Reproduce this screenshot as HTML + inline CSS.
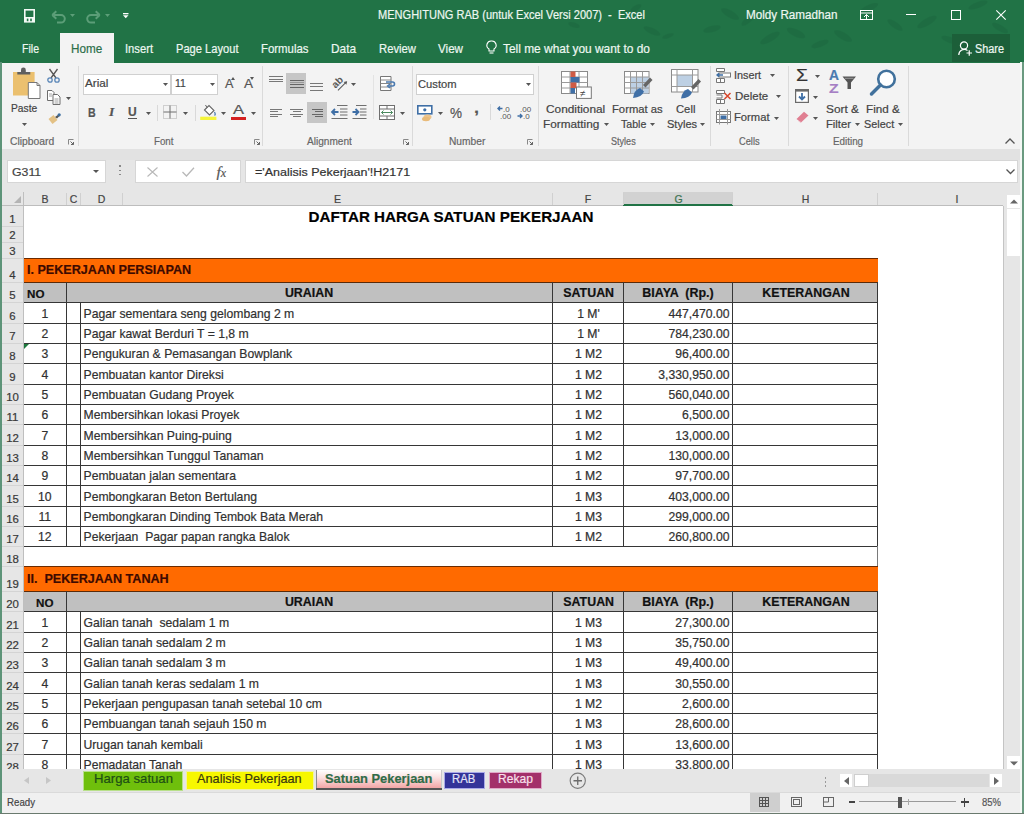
<!DOCTYPE html><html><head><meta charset="utf-8"><style>
html,body{margin:0;padding:0;width:1024px;height:814px;overflow:hidden;background:#fff;}
body{position:relative;font-family:"Liberation Sans",sans-serif;}
div,svg{position:absolute;box-sizing:border-box;}
div{-webkit-text-stroke:0.2px currentColor;}
svg{overflow:visible}
</style></head><body>
<div style="left:0px;top:0px;width:1024px;height:62px;background:#217346;"></div>
<svg style="left:0;top:0;opacity:0.55" width="1024" height="62"><ellipse cx="574" cy="25" rx="6" ry="2.5" transform="rotate(20 574 25)" fill="#1d6840"/><ellipse cx="636" cy="8" rx="6" ry="2.5" transform="rotate(-30 636 8)" fill="#1d6840"/><ellipse cx="652" cy="31" rx="9" ry="3" transform="rotate(25 652 31)" fill="#1d6840"/><ellipse cx="668" cy="36" rx="6" ry="2" transform="rotate(-20 668 36)" fill="#1d6840"/><ellipse cx="712" cy="29" rx="9" ry="3" transform="rotate(-15 712 29)" fill="#1d6840"/><ellipse cx="730" cy="14" rx="10" ry="3.5" transform="rotate(30 730 14)" fill="#1d6840"/><ellipse cx="748" cy="20" rx="8" ry="3" transform="rotate(-40 748 20)" fill="#1d6840"/><ellipse cx="770" cy="38" rx="11" ry="3.5" transform="rotate(-30 770 38)" fill="#1d6840"/><ellipse cx="796" cy="33" rx="10" ry="3.5" transform="rotate(25 796 33)" fill="#1d6840"/><ellipse cx="820" cy="44" rx="9" ry="3" transform="rotate(-20 820 44)" fill="#1d6840"/><ellipse cx="843" cy="36" rx="10" ry="3.5" transform="rotate(30 843 36)" fill="#1d6840"/><ellipse cx="869" cy="8" rx="10" ry="3" transform="rotate(-25 869 8)" fill="#1d6840"/><ellipse cx="895" cy="25" rx="9" ry="3" transform="rotate(35 895 25)" fill="#1d6840"/><ellipse cx="927" cy="22" rx="11" ry="3.5" transform="rotate(-30 927 22)" fill="#1d6840"/><ellipse cx="950" cy="40" rx="9" ry="3" transform="rotate(20 950 40)" fill="#1d6840"/><ellipse cx="978" cy="5" rx="10" ry="3" transform="rotate(-20 978 5)" fill="#1d6840"/><ellipse cx="1000" cy="28" rx="9" ry="3" transform="rotate(30 1000 28)" fill="#1d6840"/></svg>
<svg style="left:23.5px;top:9.3px;" width="11" height="13.6" viewBox="0 0 11 13.6"><rect x="0" y="0" width="11" height="13.6" fill="#f4faf6"/><rect x="1.6" y="1.6" width="7.8" height="6.4" fill="#217346"/><rect x="2.8" y="9.6" width="1.6" height="2.6" fill="#217346"/><rect x="6.2" y="9.6" width="1.6" height="2.6" fill="#217346"/></svg>
<svg style="left:51px;top:9.5px;" width="16" height="13" viewBox="0 0 16 13"><path d="M3 5 H10 A3.8 3.8 0 0 1 10 12.6 H6" fill="none" stroke="#5c9e78" stroke-width="2"/><path d="M1.3 5 L5.3 1.2 M1.3 5 L5.3 8.8" stroke="#5c9e78" stroke-width="2" fill="none"/></svg>
<svg style="left:70px;top:14px;" width="5" height="3" viewBox="0 0 5 3"><path d="M0 0 H5 L2.5 3 Z" fill="#5c9e78"/></svg>
<svg style="left:85px;top:9.5px;" width="16" height="13" viewBox="0 0 16 13"><path d="M13 5 H6 A3.8 3.8 0 0 0 6 12.6 H10" fill="none" stroke="#5c9e78" stroke-width="2"/><path d="M14.7 5 L10.7 1.2 M14.7 5 L10.7 8.8" stroke="#5c9e78" stroke-width="2" fill="none"/></svg>
<svg style="left:105px;top:14px;" width="5" height="3" viewBox="0 0 5 3"><path d="M0 0 H5 L2.5 3 Z" fill="#5c9e78"/></svg>
<svg style="left:122.8px;top:12.6px;" width="5.5" height="6" viewBox="0 0 5.5 6"><rect x="0" y="0" width="5.5" height="1.3" fill="#fff"/><path d="M0 2.2 H5.5 L2.75 5.2 Z" fill="#fff"/></svg>
<div style="top:8.16px;font-size:12.3px;line-height:14.76px;color:#eef7f1;font-weight:400;white-space:pre;font-family:'Liberation Sans',sans-serif;left:378px;transform:scaleX(0.897990714246301);transform-origin:left center;">MENGHITUNG RAB (untuk Excel Versi 2007)  -  Excel</div>
<div style="top:8.16px;font-size:12.3px;line-height:14.76px;color:#eef7f1;font-weight:400;white-space:pre;font-family:'Liberation Sans',sans-serif;left:745.5px;transform:scaleX(0.9491701244813278);transform-origin:left center;">Moldy Ramadhan</div>
<svg style="left:860px;top:10px;" width="13" height="10" viewBox="0 0 13 10"><rect x="0.5" y="0.5" width="12" height="9" fill="none" stroke="#fff" stroke-width="1"/><path d="M1 3 H12" stroke="#fff"/><path d="M4 7 L6.5 4.5 L9 7 M6.5 4.5 V9" fill="none" stroke="#fff" stroke-width="1"/></svg>
<div style="left:906px;top:14px;width:10px;height:1px;background:#fff;"></div>
<svg style="left:951px;top:10px;" width="10" height="10" viewBox="0 0 10 10"><rect x="0.5" y="0.5" width="9" height="9" fill="none" stroke="#fff" stroke-width="1"/></svg>
<svg style="left:996px;top:10px;" width="10" height="10" viewBox="0 0 10 10"><path d="M0.3 0.3 L9.7 9.7 M9.7 0.3 L0.3 9.7" stroke="#fff" stroke-width="1.1"/></svg>
<div style="left:60px;top:33px;width:54px;height:29px;background:#f3f3f3;"></div>
<div style="top:41.08px;font-size:12.8px;line-height:15.36px;color:#eef7f1;font-weight:400;white-space:pre;font-family:'Liberation Sans',sans-serif;left:21.5px;transform:scaleX(0.8242424242424242);transform-origin:left center;">File</div>
<div style="top:41.08px;font-size:12.8px;line-height:15.36px;color:#2b6e48;font-weight:400;white-space:pre;font-family:'Liberation Sans',sans-serif;left:70.8px;transform:scaleX(0.913783635365184);transform-origin:left center;">Home</div>
<div style="top:41.08px;font-size:12.8px;line-height:15.36px;color:#eef7f1;font-weight:400;white-space:pre;font-family:'Liberation Sans',sans-serif;left:125.2px;transform:scaleX(0.8746583365872705);transform-origin:left center;">Insert</div>
<div style="top:41.08px;font-size:12.8px;line-height:15.36px;color:#eef7f1;font-weight:400;white-space:pre;font-family:'Liberation Sans',sans-serif;left:176.3px;transform:scaleX(0.8694896095991653);transform-origin:left center;">Page Layout</div>
<div style="top:41.08px;font-size:12.8px;line-height:15.36px;color:#eef7f1;font-weight:400;white-space:pre;font-family:'Liberation Sans',sans-serif;left:261px;transform:scaleX(0.8904510837727007);transform-origin:left center;">Formulas</div>
<div style="top:41.08px;font-size:12.8px;line-height:15.36px;color:#eef7f1;font-weight:400;white-space:pre;font-family:'Liberation Sans',sans-serif;left:331px;transform:scaleX(0.9246417013407304);transform-origin:left center;">Data</div>
<div style="top:41.08px;font-size:12.8px;line-height:15.36px;color:#eef7f1;font-weight:400;white-space:pre;font-family:'Liberation Sans',sans-serif;left:378.5px;transform:scaleX(0.8816083395383469);transform-origin:left center;">Review</div>
<div style="top:41.08px;font-size:12.8px;line-height:15.36px;color:#eef7f1;font-weight:400;white-space:pre;font-family:'Liberation Sans',sans-serif;left:437.5px;transform:scaleX(0.9086778736937756);transform-origin:left center;">View</div>
<svg style="left:486px;top:40px;" width="11" height="15" viewBox="0 0 11 15"><path d="M5.5 1 A4.3 4.3 0 0 1 8 9 V11 H3 V9 A4.3 4.3 0 0 1 5.5 1 Z" fill="none" stroke="#fff" stroke-width="1.1"/><path d="M3.5 13 H7.5" stroke="#fff" stroke-width="1.1"/></svg>
<div style="top:41.08px;font-size:12.8px;line-height:15.36px;color:#eef7f1;font-weight:400;white-space:pre;font-family:'Liberation Sans',sans-serif;left:502.5px;transform:scaleX(0.9306742640075975);transform-origin:left center;">Tell me what you want to do</div>
<div style="left:952px;top:34px;width:58px;height:28px;background:#1c5f39;"></div>
<svg style="left:958px;top:41px;" width="14" height="15" viewBox="0 0 14 15"><circle cx="6" cy="4.5" r="3.6" fill="none" stroke="#fff" stroke-width="1.2"/><path d="M0.8 14 A5.5 5.5 0 0 1 9.5 9.5" fill="none" stroke="#fff" stroke-width="1.2"/><path d="M8.5 12 H14 M11.25 9.25 V14.75" stroke="#fff" stroke-width="1.2"/></svg>
<div style="top:42.36px;font-size:12.3px;line-height:14.76px;color:#eef7f1;font-weight:400;white-space:pre;font-family:'Liberation Sans',sans-serif;left:975px;transform:scaleX(0.8835570789298296);transform-origin:left center;">Share</div>
<div style="left:0px;top:62px;width:1024px;height:87px;background:#f3f3f3;"></div>
<div style="left:0px;top:62px;width:60px;height:1px;background:#217346;"></div>
<div style="left:114px;top:62px;width:910px;height:1px;background:#217346;"></div>
<div style="left:78px;top:66px;width:1px;height:80px;background:#dadada;"></div>
<div style="left:262px;top:66px;width:1px;height:80px;background:#dadada;"></div>
<div style="left:412px;top:66px;width:1px;height:80px;background:#dadada;"></div>
<div style="left:538px;top:66px;width:1px;height:80px;background:#dadada;"></div>
<div style="left:710px;top:66px;width:1px;height:80px;background:#dadada;"></div>
<div style="left:788px;top:66px;width:1px;height:80px;background:#dadada;"></div>
<div style="left:908px;top:66px;width:1px;height:80px;background:#dadada;"></div>
<div style="top:135.19px;font-size:11px;line-height:13.20px;color:#666666;font-weight:400;white-space:pre;font-family:'Liberation Sans',sans-serif;left:9.7px;transform:scaleX(0.9408641401738899);transform-origin:left center;">Clipboard</div>
<div style="top:135.19px;font-size:11px;line-height:13.20px;color:#666666;font-weight:400;white-space:pre;font-family:'Liberation Sans',sans-serif;left:154px;transform:scaleX(0.8858917480035492);transform-origin:left center;">Font</div>
<div style="top:135.19px;font-size:11px;line-height:13.20px;color:#666666;font-weight:400;white-space:pre;font-family:'Liberation Sans',sans-serif;left:307px;transform:scaleX(0.9158627739091547);transform-origin:left center;">Alignment</div>
<div style="top:135.19px;font-size:11px;line-height:13.20px;color:#666666;font-weight:400;white-space:pre;font-family:'Liberation Sans',sans-serif;left:449px;transform:scaleX(0.9278140537950039);transform-origin:left center;">Number</div>
<div style="top:135.19px;font-size:11px;line-height:13.20px;color:#666666;font-weight:400;white-space:pre;font-family:'Liberation Sans',sans-serif;left:611.3px;transform:scaleX(0.8245787908820614);transform-origin:left center;">Styles</div>
<div style="top:135.19px;font-size:11px;line-height:13.20px;color:#666666;font-weight:400;white-space:pre;font-family:'Liberation Sans',sans-serif;left:738.7px;transform:scaleX(0.8425627096980349);transform-origin:left center;">Cells</div>
<div style="top:135.19px;font-size:11px;line-height:13.20px;color:#666666;font-weight:400;white-space:pre;font-family:'Liberation Sans',sans-serif;left:832.8px;transform:scaleX(0.8949177738548733);transform-origin:left center;">Editing</div>
<svg style="left:68px;top:139px;" width="6" height="6" viewBox="0 0 6 6"><path d="M0.5 5.5 V0.5 H5.5" fill="none" stroke="#888" stroke-width="1"/><path d="M2.5 2.5 L5.5 5.5 M5.5 3 V5.5 H3" fill="none" stroke="#666" stroke-width="1"/></svg>
<svg style="left:254px;top:139px;" width="6" height="6" viewBox="0 0 6 6"><path d="M0.5 5.5 V0.5 H5.5" fill="none" stroke="#888" stroke-width="1"/><path d="M2.5 2.5 L5.5 5.5 M5.5 3 V5.5 H3" fill="none" stroke="#666" stroke-width="1"/></svg>
<svg style="left:403px;top:139px;" width="6" height="6" viewBox="0 0 6 6"><path d="M0.5 5.5 V0.5 H5.5" fill="none" stroke="#888" stroke-width="1"/><path d="M2.5 2.5 L5.5 5.5 M5.5 3 V5.5 H3" fill="none" stroke="#666" stroke-width="1"/></svg>
<svg style="left:527px;top:139px;" width="6" height="6" viewBox="0 0 6 6"><path d="M0.5 5.5 V0.5 H5.5" fill="none" stroke="#888" stroke-width="1"/><path d="M2.5 2.5 L5.5 5.5 M5.5 3 V5.5 H3" fill="none" stroke="#666" stroke-width="1"/></svg>
<svg style="left:1005px;top:138px;" width="10" height="6" viewBox="0 0 10 6"><path d="M0.5 5.5 L5 1 L9.5 5.5" fill="none" stroke="#555" stroke-width="1.3"/></svg>
<svg style="left:12px;top:68px;" width="30" height="32" viewBox="0 0 30 32"><rect x="1" y="4" width="21.6" height="23.5" fill="#ebc06f"/><path d="M5.3 6.5 V4 H9 V2 A2.4 2.4 0 0 1 13.8 2 V4 H18.3 V6.5 Z" fill="#5f5f5f"/><path d="M16.3 14.5 H25 L28 17.5 V30.5 H16.3 Z" fill="#fff" stroke="#777" stroke-width="1"/><path d="M25 14.5 V17.5 H28" fill="none" stroke="#777" stroke-width="1"/></svg>
<div style="top:102.19px;font-size:11px;line-height:13.20px;color:#444444;font-weight:400;white-space:pre;font-family:'Liberation Sans',sans-serif;left:11.4px;transform:scaleX(0.9314261908068323);transform-origin:left center;">Paste</div>
<svg style="left:22px;top:123px;" width="5" height="3" viewBox="0 0 5 3"><path d="M0 0 H5 L2.5 3 Z" fill="#555"/></svg>
<svg style="left:47px;top:68px;" width="13" height="15" viewBox="0 0 13 15"><path d="M2.5 1 L9 10 M10.5 1 L4 10" stroke="#555" stroke-width="1.3" fill="none"/><circle cx="3" cy="12" r="2.2" fill="none" stroke="#5b87b8" stroke-width="1.3"/><circle cx="10" cy="12" r="2.2" fill="none" stroke="#5b87b8" stroke-width="1.3"/></svg>
<svg style="left:47px;top:90px;" width="14" height="15" viewBox="0 0 14 15"><path d="M0.5 0.5 H5 L7 2.5 V10.5 H0.5 Z" fill="#fff" stroke="#6d6d6d"/><path d="M6 4.5 H10.5 L13 7 V14.5 H6 Z" fill="#fff" stroke="#6d6d6d"/><path d="M2 4 H5 M2 6 H5 M7.5 9 H11.5 M7.5 11 H11.5 M7.5 13 H11.5" stroke="#888" stroke-width="0.8"/></svg>
<svg style="left:66px;top:97px;" width="5" height="3" viewBox="0 0 5 3"><path d="M0 0 H5 L2.5 3 Z" fill="#555"/></svg>
<svg style="left:47px;top:113px;" width="14" height="12" viewBox="0 0 14 12"><path d="M1.5 6 L6.5 2 L10.5 7 L5.5 11 Z" fill="#e3c185"/><path d="M8 4 L11.5 1.5 L12.5 3 L10 5.5 Z" fill="#555"/><circle cx="12.2" cy="1.8" r="1.6" fill="#3c6ea0"/></svg>
<div style="left:82.5px;top:73.5px;width:88.5px;height:21px;background:#fff;border:1px solid #d0d0d0;"></div>
<div style="left:171px;top:73.5px;width:47px;height:21px;background:#fff;border:1px solid #d0d0d0;"></div>
<div style="top:77.12px;font-size:11.5px;line-height:13.80px;color:#444444;font-weight:400;white-space:pre;font-family:'Liberation Sans',sans-serif;left:84.8px;transform:scaleX(1.0171494549529663);transform-origin:left center;">Arial</div>
<svg style="left:162.5px;top:83px;" width="5" height="3" viewBox="0 0 5 3"><path d="M0 0 H5 L2.5 3 Z" fill="#555"/></svg>
<div style="top:77.12px;font-size:11.5px;line-height:13.80px;color:#444444;font-weight:400;white-space:pre;font-family:'Liberation Sans',sans-serif;left:174.7px;transform:scaleX(0.9045936395759717);transform-origin:left center;">11</div>
<svg style="left:209.5px;top:83px;" width="5" height="3" viewBox="0 0 5 3"><path d="M0 0 H5 L2.5 3 Z" fill="#555"/></svg>
<div style="top:76.20px;font-size:13px;line-height:15.60px;color:#555;font-weight:400;white-space:pre;font-family:'Liberation Sans',sans-serif;left:224.5px;transform:scaleX(0.968735922155149);transform-origin:left center;">A</div>
<svg style="left:231px;top:77px;" width="4" height="3" viewBox="0 0 4 3"><path d="M0 3 L2 0 L4 3 Z" fill="#555"/></svg>
<div style="top:76.20px;font-size:13px;line-height:15.60px;color:#555;font-weight:400;white-space:pre;font-family:'Liberation Sans',sans-serif;left:244.2px;transform:scaleX(1.037931345166231);transform-origin:left center;">A</div>
<svg style="left:250px;top:77px;" width="4" height="3" viewBox="0 0 4 3"><path d="M0 0 H4 L2 3 Z" fill="#555"/></svg>
<div style="top:104.90px;font-size:13px;line-height:15.60px;color:#555;font-weight:700;white-space:pre;font-family:'Liberation Sans',sans-serif;left:87.9px;transform:scaleX(0.8201714238162603);transform-origin:left center;">B</div>
<div style="top:104.42px;font-size:13.5px;line-height:16.20px;color:#555;font-weight:700;white-space:pre;font-family:'Liberation Serif',serif;left:109px;font-style:italic;">I</div>
<div style="top:104.00px;font-size:13px;line-height:15.60px;color:#555;font-weight:700;white-space:pre;font-family:'Liberation Sans',sans-serif;left:128.3px;transform:scaleX(0.9266871931430473);transform-origin:left center;">U</div>
<div style="left:128.3px;top:118px;width:8.7px;height:1.2px;background:#555;"></div>
<svg style="left:145.5px;top:112px;" width="5" height="3" viewBox="0 0 5 3"><path d="M0 0 H5 L2.5 3 Z" fill="#555"/></svg>
<div style="left:156.5px;top:104.5px;width:1px;height:16.5px;background:#d9d9d9;"></div>
<svg style="left:163px;top:105px;" width="14" height="14" viewBox="0 0 14 14"><rect x="0.5" y="0.5" width="13" height="13" fill="none" stroke="#aaa" stroke-dasharray="1 1"/><path d="M7 0.5 V13.5 M0.5 7 H13.5" stroke="#6f6f6f"/></svg>
<svg style="left:183px;top:112px;" width="5" height="3" viewBox="0 0 5 3"><path d="M0 0 H5 L2.5 3 Z" fill="#555"/></svg>
<div style="left:194.5px;top:104.5px;width:1px;height:16.5px;background:#d9d9d9;"></div>
<svg style="left:200px;top:104px;" width="17" height="16" viewBox="0 0 17 16"><path d="M4.5 6 L9 1.5 L14 6.5 L9.5 11 Z" fill="#fff" stroke="#666" stroke-width="1.1"/><path d="M7 3.5 L5.5 1" stroke="#666" stroke-width="1"/><path d="M14.5 8 Q16 10.5 14.5 11.5" fill="none" stroke="#4a7ab0" stroke-width="1.2"/><rect x="0.2" y="12.7" width="16.2" height="3.3" fill="#f5f53a"/></svg>
<svg style="left:220.8px;top:112px;" width="5" height="3" viewBox="0 0 5 3"><path d="M0 0 H5 L2.5 3 Z" fill="#555"/></svg>
<div style="top:101.82px;font-size:13.5px;line-height:16.20px;color:#555;font-weight:400;white-space:pre;font-family:'Liberation Sans',sans-serif;left:232.6px;transform:scaleX(1.2215859795245534);transform-origin:left center;">A</div>
<div style="left:230.7px;top:116.7px;width:15.8px;height:3.3px;background:#d42020;"></div>
<svg style="left:251.4px;top:112px;" width="5" height="3" viewBox="0 0 5 3"><path d="M0 0 H5 L2.5 3 Z" fill="#555"/></svg>
<div style="left:269px;top:76px;width:13.8px;height:1.2px;background:#777;"></div>
<div style="left:269px;top:78.5px;width:13.8px;height:1.2px;background:#777;"></div>
<div style="left:269px;top:81px;width:13.8px;height:1.2px;background:#777;"></div>
<div style="left:286.2px;top:73.3px;width:20px;height:21px;background:#c6c6c6;"></div>
<div style="left:290px;top:79.5px;width:13.5px;height:1.2px;background:#666;"></div>
<div style="left:290px;top:84px;width:13.5px;height:1.2px;background:#666;"></div>
<div style="left:290px;top:87px;width:13.5px;height:1.2px;background:#666;"></div>
<div style="left:290px;top:81.8px;width:13.5px;height:1px;background:#999;"></div>
<div style="left:309.6px;top:82.5px;width:13.9px;height:1.2px;background:#777;"></div>
<div style="left:309.6px;top:86px;width:13.9px;height:1.2px;background:#777;"></div>
<div style="left:309.6px;top:89.6px;width:13.9px;height:1.2px;background:#777;"></div>
<svg style="left:330px;top:74px;" width="18" height="18" viewBox="0 0 18 18"><g transform="rotate(-45 9 9)"><text x="2.5" y="10.5" font-family="Liberation Sans" font-size="10" font-weight="700" fill="#5a5a5a">ab</text><path d="M3 13.5 H15" stroke="#5a5a5a" stroke-width="1.1"/><path d="M13 11.5 L16 13.5 L13 15.5 Z" fill="#5a5a5a"/></g></svg>
<svg style="left:350.6px;top:83px;" width="5" height="3" viewBox="0 0 5 3"><path d="M0 0 H5 L2.5 3 Z" fill="#555"/></svg>
<div style="left:373.3px;top:75px;width:1px;height:44px;background:#e3e3e3;"></div>
<svg style="left:380px;top:76px;" width="16" height="15" viewBox="0 0 16 15"><path d="M0.5 0.5 H11 V14.5 H0.5 Z" fill="#fff" stroke="#777"/><path d="M0.5 4 H11 M0.5 7.5 H11 M0.5 11 H11" stroke="#888"/><path d="M6 6 H12.5 A2 2 0 0 1 12.5 10 H8.5" fill="none" stroke="#4a7ab0" stroke-width="1.6"/><path d="M10 8 L7.5 10 L10 12" fill="none" stroke="#4a7ab0" stroke-width="1.4"/></svg>
<div style="left:270px;top:108.5px;width:11.8px;height:1.2px;background:#777;"></div>
<div style="left:270px;top:111px;width:8px;height:1.2px;background:#777;"></div>
<div style="left:270px;top:113.5px;width:11.8px;height:1.2px;background:#777;"></div>
<div style="left:270px;top:116px;width:8px;height:1.2px;background:#777;"></div>
<div style="left:289.8px;top:108.5px;width:13.2px;height:1.2px;background:#777;"></div>
<div style="left:292.5px;top:111px;width:8px;height:1.2px;background:#777;"></div>
<div style="left:289.8px;top:113.5px;width:13.2px;height:1.2px;background:#777;"></div>
<div style="left:292.5px;top:116px;width:8px;height:1.2px;background:#777;"></div>
<div style="left:306.7px;top:102.3px;width:20px;height:20.8px;background:#c6c6c6;"></div>
<div style="left:311.5px;top:108.5px;width:11.3px;height:1.2px;background:#666;"></div>
<div style="left:315px;top:111px;width:7.8px;height:1.2px;background:#666;"></div>
<div style="left:311.5px;top:113.5px;width:11.3px;height:1.2px;background:#666;"></div>
<div style="left:315px;top:116px;width:7.8px;height:1.2px;background:#666;"></div>
<svg style="left:330.5px;top:105px;" width="17" height="14" viewBox="0 0 17 14"><path d="M6 0.5 H16.5 M9 4 H16.5 M9 7 H16.5 M9 10 H16.5 M0.5 13.5 H16.5" stroke="#6f6f6f" stroke-width="1.1"/><path d="M1 7 H7.5 M4 4 L1 7 L4 10" fill="none" stroke="#3f6fa6" stroke-width="1.8"/></svg>
<svg style="left:352px;top:105px;" width="15" height="14" viewBox="0 0 15 14"><path d="M4 0.5 H14.5 M8 4 H14.5 M8 7 H14.5 M8 10 H14.5 M0.5 13.5 H14.5" stroke="#6f6f6f" stroke-width="1.1"/><path d="M0.5 7 H6.5 M3.5 4 L6.5 7 L3.5 10" fill="none" stroke="#3f6fa6" stroke-width="1.8"/></svg>
<svg style="left:379px;top:104.5px;" width="16" height="15" viewBox="0 0 16 15"><rect x="0.5" y="0.5" width="15" height="14" fill="#fff" stroke="#6f6f6f"/><path d="M0.5 4 H15.5 M0.5 11 H15.5 M8 0.5 V4 M8 11 V14.5" stroke="#6f6f6f"/><path d="M2.5 7.5 H13.5 M4.5 5.5 L2.5 7.5 L4.5 9.5 M11.5 5.5 L13.5 7.5 L11.5 9.5" fill="none" stroke="#4b8a5f" stroke-width="1"/></svg>
<svg style="left:399.7px;top:112px;" width="5" height="3" viewBox="0 0 5 3"><path d="M0 0 H5 L2.5 3 Z" fill="#555"/></svg>
<div style="left:415.5px;top:73.5px;width:118px;height:21px;background:#fff;border:1px solid #d0d0d0;"></div>
<div style="top:77.72px;font-size:11.5px;line-height:13.80px;color:#444444;font-weight:400;white-space:pre;font-family:'Liberation Sans',sans-serif;left:417.7px;transform:scaleX(0.9742093225017745);transform-origin:left center;">Custom</div>
<svg style="left:525.5px;top:83.3px;" width="5" height="3" viewBox="0 0 5 3"><path d="M0 0 H5 L2.5 3 Z" fill="#555"/></svg>
<svg style="left:417px;top:105px;" width="16" height="16" viewBox="0 0 16 16"><rect x="0.8" y="0.8" width="14" height="8" fill="#fff" stroke="#3f6fa6" stroke-width="1.6"/><circle cx="7.8" cy="4.8" r="1.6" fill="#3f6fa6"/><ellipse cx="10.5" cy="12" rx="4" ry="2.5" fill="#eec48a"/><ellipse cx="9" cy="14" rx="4" ry="2.2" fill="#e9bb7a"/></svg>
<svg style="left:438.3px;top:112px;" width="5" height="3" viewBox="0 0 5 3"><path d="M0 0 H5 L2.5 3 Z" fill="#555"/></svg>
<div style="top:104.95px;font-size:14px;line-height:16.80px;color:#555;font-weight:400;white-space:pre;font-family:'Liberation Sans',sans-serif;left:449.9px;transform:scaleX(0.9639764026609765);transform-origin:left center;">%</div>
<div style="top:99.75px;font-size:14px;line-height:16.80px;color:#555;font-weight:700;white-space:pre;font-family:'Liberation Sans',sans-serif;left:473.7px;transform:scaleX(1.2853986744326171);transform-origin:left center;">,</div>
<div style="left:489.8px;top:104px;width:1px;height:16px;background:#d9d9d9;"></div>
<svg style="left:497px;top:105px;" width="14" height="15" viewBox="0 0 14 15"><path d="M1 3.5 H5.5 M3 1.5 L1 3.5 L3 5.5" fill="none" stroke="#3f6fa6" stroke-width="1.4"/><text x="6" y="7.3" font-family="Liberation Sans" font-size="8" fill="#555">.0</text><text x="3" y="14.3" font-family="Liberation Sans" font-size="8" fill="#555">.00</text></svg>
<svg style="left:517px;top:105px;" width="14" height="15" viewBox="0 0 14 15"><text x="3" y="7.3" font-family="Liberation Sans" font-size="8" fill="#555">.00</text><path d="M0.5 11 H5 M3 9 L5 11 L3 13" fill="none" stroke="#3f6fa6" stroke-width="1.4"/><text x="6" y="14.3" font-family="Liberation Sans" font-size="8" fill="#555">.0</text></svg>
<svg style="left:561px;top:71px;" width="31" height="28" viewBox="0 0 31 28"><rect x="0.5" y="0.5" width="26" height="22" fill="#fff" stroke="#8a8a8a"/><path d="M0.5 6 H26.5 M0.5 11.5 H26.5 M0.5 17 H26.5 M9 0.5 V22.5 M18 0.5 V22.5" stroke="#9a9a9a"/><rect x="9.5" y="0.5" width="5" height="5.5" fill="#cf5b45"/><rect x="9.5" y="6" width="9" height="5.5" fill="#3f6fa6"/><rect x="9.5" y="11.5" width="6" height="5.5" fill="#cf5b45"/><rect x="9.5" y="17" width="4.5" height="5.5" fill="#3f6fa6"/><rect x="15.5" y="16" width="14.8" height="11.4" fill="#fff" stroke="#777"/><text x="19" y="25.5" font-family="Liberation Sans" font-size="10" fill="#444">≠</text></svg>
<div style="top:102.50px;font-size:11.2px;line-height:13.44px;color:#444444;font-weight:400;white-space:pre;font-family:'Liberation Sans',sans-serif;left:545.5px;transform:scaleX(1.0582051889751705);transform-origin:left center;">Conditional</div>
<div style="top:118.00px;font-size:11.2px;line-height:13.44px;color:#444444;font-weight:400;white-space:pre;font-family:'Liberation Sans',sans-serif;left:543.2px;transform:scaleX(1.053651701792282);transform-origin:left center;">Formatting</div>
<svg style="left:603.5px;top:123px;" width="5" height="3" viewBox="0 0 5 3"><path d="M0 0 H5 L2.5 3 Z" fill="#555"/></svg>
<svg style="left:624px;top:71px;" width="30" height="28" viewBox="0 0 30 28"><rect x="0.5" y="0.5" width="24.5" height="22" fill="#fff" stroke="#8a8a8a"/><rect x="6.5" y="6" width="18" height="16.5" fill="#bdd0e4"/><path d="M0.5 6 H25 M0.5 11.5 H25 M0.5 17 H25 M6.5 0.5 V22.5 M12.5 0.5 V22.5 M18.5 0.5 V22.5" stroke="#9a9a9a"/><path d="M19 14 L26 6.5 L28.5 9 L21.5 16.5 Z" fill="#666"/><path d="M9 27 Q10 19 16 17 L20 20.5 Q18 26 9 27 Z" fill="#3f6fa6"/></svg>
<div style="top:102.50px;font-size:11.2px;line-height:13.44px;color:#444444;font-weight:400;white-space:pre;font-family:'Liberation Sans',sans-serif;left:611.6px;transform:scaleX(1.00573412267923);transform-origin:left center;">Format as</div>
<div style="top:118.00px;font-size:11.2px;line-height:13.44px;color:#444444;font-weight:400;white-space:pre;font-family:'Liberation Sans',sans-serif;left:620.6px;transform:scaleX(0.9486461251167133);transform-origin:left center;">Table</div>
<svg style="left:650px;top:123px;" width="5" height="3" viewBox="0 0 5 3"><path d="M0 0 H5 L2.5 3 Z" fill="#555"/></svg>
<svg style="left:670.5px;top:68.5px;" width="31" height="30" viewBox="0 0 31 30"><rect x="0.5" y="0.5" width="26.5" height="22.5" fill="#fff" stroke="#8a8a8a"/><rect x="6" y="6" width="15.5" height="11.5" fill="#bdd0e4"/><path d="M0.5 6 H27 M0.5 17.5 H27 M6 0.5 V23 M21.5 0.5 V23" stroke="#9a9a9a"/><path d="M20 18 L27.5 10 L30 12.5 L22.5 20.5 Z" fill="#666"/><path d="M10 29.5 Q11 22 17 20 L21 23.5 Q19 29 10 29.5 Z" fill="#3f6fa6"/></svg>
<div style="top:102.50px;font-size:11.2px;line-height:13.44px;color:#444444;font-weight:400;white-space:pre;font-family:'Liberation Sans',sans-serif;left:675.6px;transform:scaleX(1.005506964690638);transform-origin:left center;">Cell</div>
<div style="top:118.00px;font-size:11.2px;line-height:13.44px;color:#444444;font-weight:400;white-space:pre;font-family:'Liberation Sans',sans-serif;left:666.6px;transform:scaleX(0.9869105253720638);transform-origin:left center;">Styles</div>
<svg style="left:699.5px;top:123px;" width="5" height="3" viewBox="0 0 5 3"><path d="M0 0 H5 L2.5 3 Z" fill="#555"/></svg>
<svg style="left:716px;top:68px;" width="15" height="15" viewBox="0 0 15 15"><path d="M0.5 0.5 H8.5 V3.5 H0.5 Z M0.5 10.5 H8.5 V14.5 H0.5 Z M4.5 10.5 V14.5" fill="#fff" stroke="#777"/><rect x="3" y="5" width="11.5" height="4" fill="#fff" stroke="#777"/><path d="M1 7 H7 M3 5.3 L1 7 L3 8.7" fill="none" stroke="#3f6fa6" stroke-width="1.3"/></svg>
<div style="top:69.00px;font-size:11.2px;line-height:13.44px;color:#444444;font-weight:400;white-space:pre;font-family:'Liberation Sans',sans-serif;left:734.3px;transform:scaleX(0.9674792212863279);transform-origin:left center;">Insert</div>
<svg style="left:769.8px;top:74px;" width="5" height="3" viewBox="0 0 5 3"><path d="M0 0 H5 L2.5 3 Z" fill="#555"/></svg>
<svg style="left:716px;top:89.5px;" width="16" height="14" viewBox="0 0 16 14"><path d="M0.5 0.5 H8.5 V3.5 H0.5 Z M0.5 9.5 H8.5 V13.5 H0.5 Z M4.5 9.5 V13.5 M0.5 5 H6 V8 H0.5" fill="#fff" stroke="#777"/><path d="M8.5 3 L14.5 9 M14.5 3 L8.5 9" stroke="#d9472b" stroke-width="1.5"/></svg>
<div style="top:89.80px;font-size:11.2px;line-height:13.44px;color:#444444;font-weight:400;white-space:pre;font-family:'Liberation Sans',sans-serif;left:734.5px;transform:scaleX(1.0285714285714285);transform-origin:left center;">Delete</div>
<svg style="left:776px;top:95.2px;" width="5" height="3" viewBox="0 0 5 3"><path d="M0 0 H5 L2.5 3 Z" fill="#555"/></svg>
<svg style="left:716px;top:109px;" width="15" height="16" viewBox="0 0 15 16"><rect x="0.5" y="2.5" width="14" height="11" fill="#fff" stroke="#777"/><path d="M0.5 5.5 H14.5 M0.5 10.5 H14.5 M3.5 0 V15.5 M11.5 0 V15.5" stroke="#999"/><rect x="4.5" y="6.5" width="6" height="3.5" fill="#3f6fa6"/></svg>
<div style="top:111.00px;font-size:11.2px;line-height:13.44px;color:#444444;font-weight:400;white-space:pre;font-family:'Liberation Sans',sans-serif;left:734.3px;transform:scaleX(1.0036562265979474);transform-origin:left center;">Format</div>
<svg style="left:774px;top:117.2px;" width="5" height="3" viewBox="0 0 5 3"><path d="M0 0 H5 L2.5 3 Z" fill="#555"/></svg>
<div style="top:65.66px;font-size:16px;line-height:19.20px;color:#333;font-weight:400;white-space:pre;font-family:'Liberation Sans',sans-serif;left:795.5px;transform:scaleX(1.2132701421800949);transform-origin:left center;">Σ</div>
<svg style="left:814.9px;top:74.6px;" width="5" height="3" viewBox="0 0 5 3"><path d="M0 0 H5 L2.5 3 Z" fill="#555"/></svg>
<svg style="left:794.5px;top:89px;" width="14" height="14" viewBox="0 0 14 14"><rect x="0.6" y="0.6" width="12.8" height="12.8" fill="#fff" stroke="#6a6a6a" stroke-width="1.2"/><rect x="0.6" y="0.6" width="12.8" height="2" fill="#6a6a6a"/><path d="M7 4 V10.5 M4 7.5 L7 10.5 L10 7.5" fill="none" stroke="#3f6fa6" stroke-width="1.8"/></svg>
<svg style="left:813px;top:95.7px;" width="5" height="3" viewBox="0 0 5 3"><path d="M0 0 H5 L2.5 3 Z" fill="#555"/></svg>
<svg style="left:795.5px;top:111px;" width="13" height="12" viewBox="0 0 13 12"><path d="M0.5 8 L8 0.8 L12.5 4.5 L5 11.5 Z" fill="#e07f92"/><path d="M2.5 10 L5 11.5" stroke="#f1c0c9"/></svg>
<svg style="left:813px;top:117px;" width="5" height="3" viewBox="0 0 5 3"><path d="M0 0 H5 L2.5 3 Z" fill="#555"/></svg>
<div style="top:67.35px;font-size:14px;line-height:16.80px;color:#4a7ab0;font-weight:700;white-space:pre;font-family:'Liberation Sans',sans-serif;left:828.8px;transform:scaleX(0.9891043968781393);transform-origin:left center;">A</div>
<div style="top:81.32px;font-size:13.5px;line-height:16.20px;color:#a67fc4;font-weight:700;white-space:pre;font-family:'Liberation Sans',sans-serif;left:829.2px;transform:scaleX(1.1641875888204642);transform-origin:left center;">Z</div>
<svg style="left:842px;top:75.5px;" width="14.5" height="13.5" viewBox="0 0 14.5 13.5"><path d="M0.5 0.5 H14 L9 6.5 V13 H5.5 V6.5 Z" fill="#555"/><path d="M3 2.3 H11.5" stroke="#aaa" stroke-width="0.8"/></svg>
<div style="top:102.50px;font-size:11.2px;line-height:13.44px;color:#444444;font-weight:400;white-space:pre;font-family:'Liberation Sans',sans-serif;left:825.6px;transform:scaleX(1.0603208072897057);transform-origin:left center;">Sort &amp;</div>
<div style="top:118.00px;font-size:11.2px;line-height:13.44px;color:#444444;font-weight:400;white-space:pre;font-family:'Liberation Sans',sans-serif;left:825.6px;transform:scaleX(1.0044888093668582);transform-origin:left center;">Filter</div>
<svg style="left:854.5px;top:123px;" width="5" height="3" viewBox="0 0 5 3"><path d="M0 0 H5 L2.5 3 Z" fill="#555"/></svg>
<svg style="left:869px;top:69px;" width="29" height="28" viewBox="0 0 29 28"><circle cx="17.5" cy="10" r="8.3" fill="#fff" stroke="#41719c" stroke-width="2.6"/><path d="M11.5 16 L2.5 25" stroke="#41719c" stroke-width="3.5" stroke-linecap="round"/></svg>
<div style="top:102.50px;font-size:11.2px;line-height:13.44px;color:#444444;font-weight:400;white-space:pre;font-family:'Liberation Sans',sans-serif;left:866px;transform:scaleX(1.0441918277701348);transform-origin:left center;">Find &amp;</div>
<div style="top:118.00px;font-size:11.2px;line-height:13.44px;color:#444444;font-weight:400;white-space:pre;font-family:'Liberation Sans',sans-serif;left:864.1px;transform:scaleX(0.9701837164943279);transform-origin:left center;">Select</div>
<svg style="left:897.8px;top:123px;" width="5" height="3" viewBox="0 0 5 3"><path d="M0 0 H5 L2.5 3 Z" fill="#555"/></svg>
<div style="left:0px;top:149px;width:1024px;height:57px;background:#e6e6e6;"></div>
<div style="left:0px;top:149px;width:1024px;height:11px;background:#e2e2e2;"></div>
<div style="left:6.5px;top:160px;width:99px;height:22.5px;background:#fff;border:1px solid #d6d6d6;"></div>
<div style="top:164.53px;font-size:11.7px;line-height:14.04px;color:#444;font-weight:400;white-space:pre;font-family:'Liberation Sans',sans-serif;left:11.7px;transform:scaleX(1.0521041520056298);transform-origin:left center;">G311</div>
<svg style="left:92.5px;top:169.5px;" width="6" height="3" viewBox="0 0 6 3"><path d="M0 0 H6 L3 3 Z" fill="#555"/></svg>
<div style="left:119.3px;top:165.2px;width:1.6px;height:1.6px;background:#8a8a8a;"></div>
<div style="left:119.3px;top:169.5px;width:1.6px;height:1.6px;background:#8a8a8a;"></div>
<div style="left:119.3px;top:173.79999999999998px;width:1.6px;height:1.6px;background:#8a8a8a;"></div>
<div style="left:135.3px;top:160px;width:106px;height:22.8px;background:#fff;border:1px solid #d6d6d6;"></div>
<svg style="left:147px;top:167px;" width="11" height="10" viewBox="0 0 11 10"><path d="M0.5 0.5 L10.5 9.5 M10.5 0.5 L0.5 9.5" stroke="#b8b8b8" stroke-width="1.1"/></svg>
<svg style="left:182px;top:167px;" width="12.5" height="10" viewBox="0 0 12.5 10"><path d="M0.5 5 L4.5 9 L12 0.8" fill="none" stroke="#b8b8b8" stroke-width="1.3"/></svg>
<div style="top:162.63px;font-size:15.5px;line-height:18.60px;color:#555;font-weight:400;white-space:pre;font-family:'Liberation Serif',serif;left:216.5px;font-style:italic;">f<span style="font-size:12px">x</span></div>
<div style="left:244.5px;top:160px;width:773px;height:22.8px;background:#fff;border:1px solid #d6d6d6;"></div>
<div style="top:165.23px;font-size:11.7px;line-height:14.04px;color:#333;font-weight:400;white-space:pre;font-family:'Liberation Sans',sans-serif;left:255.4px;transform:scaleX(1.0689783121904526);transform-origin:left center;">='Analisis Pekerjaan'!H2171</div>
<svg style="left:1006px;top:169px;" width="9" height="5" viewBox="0 0 9 5"><path d="M0.5 0.5 L4.5 4.5 L8.5 0.5" fill="none" stroke="#555" stroke-width="1.3"/></svg>
<div style="left:24px;top:206px;width:979px;height:563px;background:#fff;"></div>
<div style="left:2px;top:206px;width:21px;height:563px;background:#e6e6e6;"></div>
<div style="left:23px;top:192px;width:1px;height:577px;background:#bfbfbf;"></div>
<div style="left:2px;top:205px;width:1001px;height:1px;background:#bdbdbd;"></div>
<svg style="left:14px;top:196px;" width="7" height="7" viewBox="0 0 7 7"><path d="M7 0 V7 H0 Z" fill="#b4b4b4"/></svg>
<div style="left:623px;top:192px;width:110px;height:13px;background:#d2d2d2;"></div>
<div style="left:623px;top:204px;width:110px;height:2px;background:#217346;"></div>
<div style="left:66px;top:193px;width:1px;height:12px;background:#d0d0d0;"></div>
<div style="left:80px;top:193px;width:1px;height:12px;background:#d0d0d0;"></div>
<div style="left:122px;top:193px;width:1px;height:12px;background:#d0d0d0;"></div>
<div style="left:552px;top:193px;width:1px;height:12px;background:#d0d0d0;"></div>
<div style="left:623px;top:193px;width:1px;height:12px;background:#d0d0d0;"></div>
<div style="left:732px;top:193px;width:1px;height:12px;background:#d0d0d0;"></div>
<div style="left:877px;top:193px;width:1px;height:12px;background:#d0d0d0;"></div>
<div style="top:192.96px;font-size:10.5px;line-height:12.60px;color:#444;font-weight:400;white-space:pre;font-family:'Liberation Sans',sans-serif;left:-455px;width:1000px;text-align:center;">B</div>
<div style="top:192.96px;font-size:10.5px;line-height:12.60px;color:#444;font-weight:400;white-space:pre;font-family:'Liberation Sans',sans-serif;left:-426.5px;width:1000px;text-align:center;">C</div>
<div style="top:192.96px;font-size:10.5px;line-height:12.60px;color:#444;font-weight:400;white-space:pre;font-family:'Liberation Sans',sans-serif;left:-398.5px;width:1000px;text-align:center;">D</div>
<div style="top:192.96px;font-size:10.5px;line-height:12.60px;color:#444;font-weight:400;white-space:pre;font-family:'Liberation Sans',sans-serif;left:-162.5px;width:1000px;text-align:center;">E</div>
<div style="top:192.96px;font-size:10.5px;line-height:12.60px;color:#444;font-weight:400;white-space:pre;font-family:'Liberation Sans',sans-serif;left:88px;width:1000px;text-align:center;">F</div>
<div style="top:192.96px;font-size:10.5px;line-height:12.60px;color:#444;font-weight:400;white-space:pre;font-family:'Liberation Sans',sans-serif;left:305.5px;width:1000px;text-align:center;">H</div>
<div style="top:192.96px;font-size:10.5px;line-height:12.60px;color:#444;font-weight:400;white-space:pre;font-family:'Liberation Sans',sans-serif;left:457px;width:1000px;text-align:center;">I</div>
<div style="top:192.96px;font-size:10.5px;line-height:12.60px;color:#3d7352;font-weight:400;white-space:pre;font-family:'Liberation Sans',sans-serif;left:178.70000000000005px;width:1000px;text-align:center;">G</div>
<div style="left:2px;top:226px;width:21px;height:1px;background:#d4d4d4;"></div>
<div style="top:212.91px;font-size:11.4px;line-height:13.68px;color:#383838;font-weight:400;white-space:pre;font-family:'Liberation Sans',sans-serif;left:-487.5px;width:1000px;text-align:center;">1</div>
<div style="left:2px;top:242px;width:21px;height:1px;background:#d4d4d4;"></div>
<div style="top:228.91px;font-size:11.4px;line-height:13.68px;color:#383838;font-weight:400;white-space:pre;font-family:'Liberation Sans',sans-serif;left:-487.5px;width:1000px;text-align:center;">2</div>
<div style="left:2px;top:258px;width:21px;height:1px;background:#d4d4d4;"></div>
<div style="top:244.91px;font-size:11.4px;line-height:13.68px;color:#383838;font-weight:400;white-space:pre;font-family:'Liberation Sans',sans-serif;left:-487.5px;width:1000px;text-align:center;">3</div>
<div style="left:2px;top:282px;width:21px;height:1px;background:#d4d4d4;"></div>
<div style="top:268.91px;font-size:11.4px;line-height:13.68px;color:#383838;font-weight:400;white-space:pre;font-family:'Liberation Sans',sans-serif;left:-487.5px;width:1000px;text-align:center;">4</div>
<div style="left:2px;top:302px;width:21px;height:1px;background:#d4d4d4;"></div>
<div style="top:288.91px;font-size:11.4px;line-height:13.68px;color:#383838;font-weight:400;white-space:pre;font-family:'Liberation Sans',sans-serif;left:-487.5px;width:1000px;text-align:center;">5</div>
<div style="left:2px;top:323px;width:21px;height:1px;background:#d4d4d4;"></div>
<div style="top:309.91px;font-size:11.4px;line-height:13.68px;color:#383838;font-weight:400;white-space:pre;font-family:'Liberation Sans',sans-serif;left:-487.5px;width:1000px;text-align:center;">6</div>
<div style="left:2px;top:343px;width:21px;height:1px;background:#d4d4d4;"></div>
<div style="top:329.91px;font-size:11.4px;line-height:13.68px;color:#383838;font-weight:400;white-space:pre;font-family:'Liberation Sans',sans-serif;left:-487.5px;width:1000px;text-align:center;">7</div>
<div style="left:2px;top:363px;width:21px;height:1px;background:#d4d4d4;"></div>
<div style="top:349.91px;font-size:11.4px;line-height:13.68px;color:#383838;font-weight:400;white-space:pre;font-family:'Liberation Sans',sans-serif;left:-487.5px;width:1000px;text-align:center;">8</div>
<div style="left:2px;top:384px;width:21px;height:1px;background:#d4d4d4;"></div>
<div style="top:370.91px;font-size:11.4px;line-height:13.68px;color:#383838;font-weight:400;white-space:pre;font-family:'Liberation Sans',sans-serif;left:-487.5px;width:1000px;text-align:center;">9</div>
<div style="left:2px;top:404px;width:21px;height:1px;background:#d4d4d4;"></div>
<div style="top:390.91px;font-size:11.4px;line-height:13.68px;color:#383838;font-weight:400;white-space:pre;font-family:'Liberation Sans',sans-serif;left:-487.5px;width:1000px;text-align:center;">10</div>
<div style="left:2px;top:424px;width:21px;height:1px;background:#d4d4d4;"></div>
<div style="top:410.91px;font-size:11.4px;line-height:13.68px;color:#383838;font-weight:400;white-space:pre;font-family:'Liberation Sans',sans-serif;left:-487.5px;width:1000px;text-align:center;">11</div>
<div style="left:2px;top:445px;width:21px;height:1px;background:#d4d4d4;"></div>
<div style="top:431.91px;font-size:11.4px;line-height:13.68px;color:#383838;font-weight:400;white-space:pre;font-family:'Liberation Sans',sans-serif;left:-487.5px;width:1000px;text-align:center;">12</div>
<div style="left:2px;top:465px;width:21px;height:1px;background:#d4d4d4;"></div>
<div style="top:451.91px;font-size:11.4px;line-height:13.68px;color:#383838;font-weight:400;white-space:pre;font-family:'Liberation Sans',sans-serif;left:-487.5px;width:1000px;text-align:center;">13</div>
<div style="left:2px;top:485px;width:21px;height:1px;background:#d4d4d4;"></div>
<div style="top:471.91px;font-size:11.4px;line-height:13.68px;color:#383838;font-weight:400;white-space:pre;font-family:'Liberation Sans',sans-serif;left:-487.5px;width:1000px;text-align:center;">14</div>
<div style="left:2px;top:506px;width:21px;height:1px;background:#d4d4d4;"></div>
<div style="top:492.91px;font-size:11.4px;line-height:13.68px;color:#383838;font-weight:400;white-space:pre;font-family:'Liberation Sans',sans-serif;left:-487.5px;width:1000px;text-align:center;">15</div>
<div style="left:2px;top:526px;width:21px;height:1px;background:#d4d4d4;"></div>
<div style="top:512.91px;font-size:11.4px;line-height:13.68px;color:#383838;font-weight:400;white-space:pre;font-family:'Liberation Sans',sans-serif;left:-487.5px;width:1000px;text-align:center;">16</div>
<div style="left:2px;top:546px;width:21px;height:1px;background:#d4d4d4;"></div>
<div style="top:532.91px;font-size:11.4px;line-height:13.68px;color:#383838;font-weight:400;white-space:pre;font-family:'Liberation Sans',sans-serif;left:-487.5px;width:1000px;text-align:center;">17</div>
<div style="left:2px;top:566px;width:21px;height:1px;background:#d4d4d4;"></div>
<div style="top:552.91px;font-size:11.4px;line-height:13.68px;color:#383838;font-weight:400;white-space:pre;font-family:'Liberation Sans',sans-serif;left:-487.5px;width:1000px;text-align:center;">18</div>
<div style="left:2px;top:591px;width:21px;height:1px;background:#d4d4d4;"></div>
<div style="top:577.91px;font-size:11.4px;line-height:13.68px;color:#383838;font-weight:400;white-space:pre;font-family:'Liberation Sans',sans-serif;left:-487.5px;width:1000px;text-align:center;">19</div>
<div style="left:2px;top:611px;width:21px;height:1px;background:#d4d4d4;"></div>
<div style="top:597.91px;font-size:11.4px;line-height:13.68px;color:#383838;font-weight:400;white-space:pre;font-family:'Liberation Sans',sans-serif;left:-487.5px;width:1000px;text-align:center;">20</div>
<div style="left:2px;top:632px;width:21px;height:1px;background:#d4d4d4;"></div>
<div style="top:618.91px;font-size:11.4px;line-height:13.68px;color:#383838;font-weight:400;white-space:pre;font-family:'Liberation Sans',sans-serif;left:-487.5px;width:1000px;text-align:center;">21</div>
<div style="left:2px;top:652px;width:21px;height:1px;background:#d4d4d4;"></div>
<div style="top:638.91px;font-size:11.4px;line-height:13.68px;color:#383838;font-weight:400;white-space:pre;font-family:'Liberation Sans',sans-serif;left:-487.5px;width:1000px;text-align:center;">22</div>
<div style="left:2px;top:672px;width:21px;height:1px;background:#d4d4d4;"></div>
<div style="top:658.91px;font-size:11.4px;line-height:13.68px;color:#383838;font-weight:400;white-space:pre;font-family:'Liberation Sans',sans-serif;left:-487.5px;width:1000px;text-align:center;">23</div>
<div style="left:2px;top:693px;width:21px;height:1px;background:#d4d4d4;"></div>
<div style="top:679.91px;font-size:11.4px;line-height:13.68px;color:#383838;font-weight:400;white-space:pre;font-family:'Liberation Sans',sans-serif;left:-487.5px;width:1000px;text-align:center;">24</div>
<div style="left:2px;top:713px;width:21px;height:1px;background:#d4d4d4;"></div>
<div style="top:699.91px;font-size:11.4px;line-height:13.68px;color:#383838;font-weight:400;white-space:pre;font-family:'Liberation Sans',sans-serif;left:-487.5px;width:1000px;text-align:center;">25</div>
<div style="left:2px;top:733px;width:21px;height:1px;background:#d4d4d4;"></div>
<div style="top:719.91px;font-size:11.4px;line-height:13.68px;color:#383838;font-weight:400;white-space:pre;font-family:'Liberation Sans',sans-serif;left:-487.5px;width:1000px;text-align:center;">26</div>
<div style="left:2px;top:754px;width:21px;height:1px;background:#d4d4d4;"></div>
<div style="top:740.91px;font-size:11.4px;line-height:13.68px;color:#383838;font-weight:400;white-space:pre;font-family:'Liberation Sans',sans-serif;left:-487.5px;width:1000px;text-align:center;">27</div>
<div style="left:2px;top:774px;width:21px;height:1px;background:#d4d4d4;"></div>
<div style="top:760.91px;font-size:11.4px;line-height:13.68px;color:#383838;font-weight:400;white-space:pre;font-family:'Liberation Sans',sans-serif;left:-487.5px;width:1000px;text-align:center;">28</div>
<div style="top:208.11px;font-size:15.2px;line-height:18.24px;color:#000;font-weight:700;white-space:pre;font-family:'Liberation Sans',sans-serif;left:-49px;width:1000px;text-align:center;">DAFTAR HARGA SATUAN PEKERJAAN</div>
<div style="left:24px;top:258px;width:854px;height:24px;background:#ff6a00;"></div>
<div style="left:24px;top:258px;width:854px;height:1px;background:#6a2a00;"></div>
<div style="top:263.47px;font-size:12.6px;line-height:15.12px;color:#3d0a00;font-weight:700;white-space:pre;font-family:'Liberation Sans',sans-serif;left:26.9px;">I. PEKERJAAN PERSIAPAN</div>
<div style="left:24px;top:282px;width:854px;height:20px;background:#c0c0c0;"></div>
<div style="left:24px;top:302px;width:854px;height:1px;background:#363636;"></div>
<div style="left:24px;top:282px;width:854px;height:1px;background:#5a2a08;"></div>
<div style="top:286.52px;font-size:11.6px;line-height:13.92px;color:#111;font-weight:700;white-space:pre;font-family:'Liberation Sans',sans-serif;left:27.1px;">NO</div>
<div style="top:285.76px;font-size:12.4px;line-height:14.88px;color:#111;font-weight:700;white-space:pre;font-family:'Liberation Sans',sans-serif;left:-191px;width:1000px;text-align:center;">URAIAN</div>
<div style="top:285.76px;font-size:12.4px;line-height:14.88px;color:#111;font-weight:700;white-space:pre;font-family:'Liberation Sans',sans-serif;left:88.70000000000005px;width:1000px;text-align:center;">SATUAN</div>
<div style="top:285.76px;font-size:12.4px;line-height:14.88px;color:#111;font-weight:700;white-space:pre;font-family:'Liberation Sans',sans-serif;left:178.20000000000005px;width:1000px;text-align:center;transform:scaleX(1.004678607206156);transform-origin:center center;">BIAYA  (Rp.)</div>
<div style="top:285.76px;font-size:12.4px;line-height:14.88px;color:#111;font-weight:700;white-space:pre;font-family:'Liberation Sans',sans-serif;left:305.9px;width:1000px;text-align:center;transform:scaleX(1.0024020645253466);transform-origin:center center;">KETERANGAN</div>
<div style="left:66px;top:282px;width:1px;height:20px;background:#363636;"></div>
<div style="left:552px;top:282px;width:1px;height:20px;background:#363636;"></div>
<div style="left:623px;top:282px;width:1px;height:20px;background:#363636;"></div>
<div style="left:732px;top:282px;width:1px;height:20px;background:#363636;"></div>
<div style="left:877px;top:282px;width:1px;height:20px;background:#363636;"></div>
<div style="left:24px;top:323px;width:854px;height:1px;background:#363636;"></div>
<div style="left:66px;top:302px;width:1px;height:22px;background:#363636;"></div>
<div style="left:80px;top:302px;width:1px;height:22px;background:#363636;"></div>
<div style="left:552px;top:302px;width:1px;height:22px;background:#363636;"></div>
<div style="left:623px;top:302px;width:1px;height:22px;background:#363636;"></div>
<div style="left:732px;top:302px;width:1px;height:22px;background:#363636;"></div>
<div style="left:877px;top:302px;width:1px;height:22px;background:#363636;"></div>
<div style="top:306.85px;font-size:12.2px;line-height:14.64px;color:#303030;font-weight:400;white-space:pre;font-family:'Liberation Sans',sans-serif;left:-455.2px;width:1000px;text-align:center;">1</div>
<div style="top:306.85px;font-size:12.2px;line-height:14.64px;color:#303030;font-weight:400;white-space:pre;font-family:'Liberation Sans',sans-serif;left:83.5px;">Pagar sementara seng gelombang 2 m</div>
<div style="top:306.85px;font-size:12.2px;line-height:14.64px;color:#303030;font-weight:400;white-space:pre;font-family:'Liberation Sans',sans-serif;left:88.5px;width:1000px;text-align:center;">1 M'</div>
<div style="top:306.85px;font-size:12.2px;line-height:14.64px;color:#303030;font-weight:400;white-space:pre;font-family:'Liberation Sans',sans-serif;left:-270.5px;width:1000px;text-align:right;">447,470.00</div>
<div style="left:24px;top:343px;width:854px;height:1px;background:#363636;"></div>
<div style="left:66px;top:323px;width:1px;height:21px;background:#363636;"></div>
<div style="left:80px;top:323px;width:1px;height:21px;background:#363636;"></div>
<div style="left:552px;top:323px;width:1px;height:21px;background:#363636;"></div>
<div style="left:623px;top:323px;width:1px;height:21px;background:#363636;"></div>
<div style="left:732px;top:323px;width:1px;height:21px;background:#363636;"></div>
<div style="left:877px;top:323px;width:1px;height:21px;background:#363636;"></div>
<div style="top:326.85px;font-size:12.2px;line-height:14.64px;color:#303030;font-weight:400;white-space:pre;font-family:'Liberation Sans',sans-serif;left:-455.2px;width:1000px;text-align:center;">2</div>
<div style="top:326.85px;font-size:12.2px;line-height:14.64px;color:#303030;font-weight:400;white-space:pre;font-family:'Liberation Sans',sans-serif;left:83.5px;">Pagar kawat Berduri T = 1,8 m</div>
<div style="top:326.85px;font-size:12.2px;line-height:14.64px;color:#303030;font-weight:400;white-space:pre;font-family:'Liberation Sans',sans-serif;left:88.5px;width:1000px;text-align:center;">1 M'</div>
<div style="top:326.85px;font-size:12.2px;line-height:14.64px;color:#303030;font-weight:400;white-space:pre;font-family:'Liberation Sans',sans-serif;left:-270.5px;width:1000px;text-align:right;">784,230.00</div>
<div style="left:24px;top:363px;width:854px;height:1px;background:#363636;"></div>
<div style="left:66px;top:343px;width:1px;height:21px;background:#363636;"></div>
<div style="left:80px;top:343px;width:1px;height:21px;background:#363636;"></div>
<div style="left:552px;top:343px;width:1px;height:21px;background:#363636;"></div>
<div style="left:623px;top:343px;width:1px;height:21px;background:#363636;"></div>
<div style="left:732px;top:343px;width:1px;height:21px;background:#363636;"></div>
<div style="left:877px;top:343px;width:1px;height:21px;background:#363636;"></div>
<div style="top:346.85px;font-size:12.2px;line-height:14.64px;color:#303030;font-weight:400;white-space:pre;font-family:'Liberation Sans',sans-serif;left:-455.2px;width:1000px;text-align:center;">3</div>
<div style="top:346.85px;font-size:12.2px;line-height:14.64px;color:#303030;font-weight:400;white-space:pre;font-family:'Liberation Sans',sans-serif;left:83.5px;">Pengukuran &amp; Pemasangan Bowplank</div>
<div style="top:346.85px;font-size:12.2px;line-height:14.64px;color:#303030;font-weight:400;white-space:pre;font-family:'Liberation Sans',sans-serif;left:88.5px;width:1000px;text-align:center;">1 M2</div>
<div style="top:346.85px;font-size:12.2px;line-height:14.64px;color:#303030;font-weight:400;white-space:pre;font-family:'Liberation Sans',sans-serif;left:-270.5px;width:1000px;text-align:right;">96,400.00</div>
<div style="left:24px;top:384px;width:854px;height:1px;background:#363636;"></div>
<div style="left:66px;top:363px;width:1px;height:22px;background:#363636;"></div>
<div style="left:80px;top:363px;width:1px;height:22px;background:#363636;"></div>
<div style="left:552px;top:363px;width:1px;height:22px;background:#363636;"></div>
<div style="left:623px;top:363px;width:1px;height:22px;background:#363636;"></div>
<div style="left:732px;top:363px;width:1px;height:22px;background:#363636;"></div>
<div style="left:877px;top:363px;width:1px;height:22px;background:#363636;"></div>
<div style="top:367.85px;font-size:12.2px;line-height:14.64px;color:#303030;font-weight:400;white-space:pre;font-family:'Liberation Sans',sans-serif;left:-455.2px;width:1000px;text-align:center;">4</div>
<div style="top:367.85px;font-size:12.2px;line-height:14.64px;color:#303030;font-weight:400;white-space:pre;font-family:'Liberation Sans',sans-serif;left:83.5px;">Pembuatan kantor Direksi</div>
<div style="top:367.85px;font-size:12.2px;line-height:14.64px;color:#303030;font-weight:400;white-space:pre;font-family:'Liberation Sans',sans-serif;left:88.5px;width:1000px;text-align:center;">1 M2</div>
<div style="top:367.85px;font-size:12.2px;line-height:14.64px;color:#303030;font-weight:400;white-space:pre;font-family:'Liberation Sans',sans-serif;left:-270.5px;width:1000px;text-align:right;">3,330,950.00</div>
<div style="left:24px;top:404px;width:854px;height:1px;background:#363636;"></div>
<div style="left:66px;top:384px;width:1px;height:21px;background:#363636;"></div>
<div style="left:80px;top:384px;width:1px;height:21px;background:#363636;"></div>
<div style="left:552px;top:384px;width:1px;height:21px;background:#363636;"></div>
<div style="left:623px;top:384px;width:1px;height:21px;background:#363636;"></div>
<div style="left:732px;top:384px;width:1px;height:21px;background:#363636;"></div>
<div style="left:877px;top:384px;width:1px;height:21px;background:#363636;"></div>
<div style="top:387.85px;font-size:12.2px;line-height:14.64px;color:#303030;font-weight:400;white-space:pre;font-family:'Liberation Sans',sans-serif;left:-455.2px;width:1000px;text-align:center;">5</div>
<div style="top:387.85px;font-size:12.2px;line-height:14.64px;color:#303030;font-weight:400;white-space:pre;font-family:'Liberation Sans',sans-serif;left:83.5px;">Pembuatan Gudang Proyek</div>
<div style="top:387.85px;font-size:12.2px;line-height:14.64px;color:#303030;font-weight:400;white-space:pre;font-family:'Liberation Sans',sans-serif;left:88.5px;width:1000px;text-align:center;">1 M2</div>
<div style="top:387.85px;font-size:12.2px;line-height:14.64px;color:#303030;font-weight:400;white-space:pre;font-family:'Liberation Sans',sans-serif;left:-270.5px;width:1000px;text-align:right;">560,040.00</div>
<div style="left:24px;top:424px;width:854px;height:1px;background:#363636;"></div>
<div style="left:66px;top:404px;width:1px;height:21px;background:#363636;"></div>
<div style="left:80px;top:404px;width:1px;height:21px;background:#363636;"></div>
<div style="left:552px;top:404px;width:1px;height:21px;background:#363636;"></div>
<div style="left:623px;top:404px;width:1px;height:21px;background:#363636;"></div>
<div style="left:732px;top:404px;width:1px;height:21px;background:#363636;"></div>
<div style="left:877px;top:404px;width:1px;height:21px;background:#363636;"></div>
<div style="top:407.85px;font-size:12.2px;line-height:14.64px;color:#303030;font-weight:400;white-space:pre;font-family:'Liberation Sans',sans-serif;left:-455.2px;width:1000px;text-align:center;">6</div>
<div style="top:407.85px;font-size:12.2px;line-height:14.64px;color:#303030;font-weight:400;white-space:pre;font-family:'Liberation Sans',sans-serif;left:83.5px;">Membersihkan lokasi Proyek</div>
<div style="top:407.85px;font-size:12.2px;line-height:14.64px;color:#303030;font-weight:400;white-space:pre;font-family:'Liberation Sans',sans-serif;left:88.5px;width:1000px;text-align:center;">1 M2</div>
<div style="top:407.85px;font-size:12.2px;line-height:14.64px;color:#303030;font-weight:400;white-space:pre;font-family:'Liberation Sans',sans-serif;left:-270.5px;width:1000px;text-align:right;">6,500.00</div>
<div style="left:24px;top:445px;width:854px;height:1px;background:#363636;"></div>
<div style="left:66px;top:424px;width:1px;height:22px;background:#363636;"></div>
<div style="left:80px;top:424px;width:1px;height:22px;background:#363636;"></div>
<div style="left:552px;top:424px;width:1px;height:22px;background:#363636;"></div>
<div style="left:623px;top:424px;width:1px;height:22px;background:#363636;"></div>
<div style="left:732px;top:424px;width:1px;height:22px;background:#363636;"></div>
<div style="left:877px;top:424px;width:1px;height:22px;background:#363636;"></div>
<div style="top:428.85px;font-size:12.2px;line-height:14.64px;color:#303030;font-weight:400;white-space:pre;font-family:'Liberation Sans',sans-serif;left:-455.2px;width:1000px;text-align:center;">7</div>
<div style="top:428.85px;font-size:12.2px;line-height:14.64px;color:#303030;font-weight:400;white-space:pre;font-family:'Liberation Sans',sans-serif;left:83.5px;">Membersihkan Puing-puing</div>
<div style="top:428.85px;font-size:12.2px;line-height:14.64px;color:#303030;font-weight:400;white-space:pre;font-family:'Liberation Sans',sans-serif;left:88.5px;width:1000px;text-align:center;">1 M2</div>
<div style="top:428.85px;font-size:12.2px;line-height:14.64px;color:#303030;font-weight:400;white-space:pre;font-family:'Liberation Sans',sans-serif;left:-270.5px;width:1000px;text-align:right;">13,000.00</div>
<div style="left:24px;top:465px;width:854px;height:1px;background:#363636;"></div>
<div style="left:66px;top:445px;width:1px;height:21px;background:#363636;"></div>
<div style="left:80px;top:445px;width:1px;height:21px;background:#363636;"></div>
<div style="left:552px;top:445px;width:1px;height:21px;background:#363636;"></div>
<div style="left:623px;top:445px;width:1px;height:21px;background:#363636;"></div>
<div style="left:732px;top:445px;width:1px;height:21px;background:#363636;"></div>
<div style="left:877px;top:445px;width:1px;height:21px;background:#363636;"></div>
<div style="top:448.85px;font-size:12.2px;line-height:14.64px;color:#303030;font-weight:400;white-space:pre;font-family:'Liberation Sans',sans-serif;left:-455.2px;width:1000px;text-align:center;">8</div>
<div style="top:448.85px;font-size:12.2px;line-height:14.64px;color:#303030;font-weight:400;white-space:pre;font-family:'Liberation Sans',sans-serif;left:83.5px;">Membersihkan Tunggul Tanaman</div>
<div style="top:448.85px;font-size:12.2px;line-height:14.64px;color:#303030;font-weight:400;white-space:pre;font-family:'Liberation Sans',sans-serif;left:88.5px;width:1000px;text-align:center;">1 M2</div>
<div style="top:448.85px;font-size:12.2px;line-height:14.64px;color:#303030;font-weight:400;white-space:pre;font-family:'Liberation Sans',sans-serif;left:-270.5px;width:1000px;text-align:right;">130,000.00</div>
<div style="left:24px;top:485px;width:854px;height:1px;background:#363636;"></div>
<div style="left:66px;top:465px;width:1px;height:21px;background:#363636;"></div>
<div style="left:80px;top:465px;width:1px;height:21px;background:#363636;"></div>
<div style="left:552px;top:465px;width:1px;height:21px;background:#363636;"></div>
<div style="left:623px;top:465px;width:1px;height:21px;background:#363636;"></div>
<div style="left:732px;top:465px;width:1px;height:21px;background:#363636;"></div>
<div style="left:877px;top:465px;width:1px;height:21px;background:#363636;"></div>
<div style="top:468.85px;font-size:12.2px;line-height:14.64px;color:#303030;font-weight:400;white-space:pre;font-family:'Liberation Sans',sans-serif;left:-455.2px;width:1000px;text-align:center;">9</div>
<div style="top:468.85px;font-size:12.2px;line-height:14.64px;color:#303030;font-weight:400;white-space:pre;font-family:'Liberation Sans',sans-serif;left:83.5px;">Pembuatan jalan sementara</div>
<div style="top:468.85px;font-size:12.2px;line-height:14.64px;color:#303030;font-weight:400;white-space:pre;font-family:'Liberation Sans',sans-serif;left:88.5px;width:1000px;text-align:center;">1 M2</div>
<div style="top:468.85px;font-size:12.2px;line-height:14.64px;color:#303030;font-weight:400;white-space:pre;font-family:'Liberation Sans',sans-serif;left:-270.5px;width:1000px;text-align:right;">97,700.00</div>
<div style="left:24px;top:506px;width:854px;height:1px;background:#363636;"></div>
<div style="left:66px;top:485px;width:1px;height:22px;background:#363636;"></div>
<div style="left:80px;top:485px;width:1px;height:22px;background:#363636;"></div>
<div style="left:552px;top:485px;width:1px;height:22px;background:#363636;"></div>
<div style="left:623px;top:485px;width:1px;height:22px;background:#363636;"></div>
<div style="left:732px;top:485px;width:1px;height:22px;background:#363636;"></div>
<div style="left:877px;top:485px;width:1px;height:22px;background:#363636;"></div>
<div style="top:489.85px;font-size:12.2px;line-height:14.64px;color:#303030;font-weight:400;white-space:pre;font-family:'Liberation Sans',sans-serif;left:-455.2px;width:1000px;text-align:center;">10</div>
<div style="top:489.85px;font-size:12.2px;line-height:14.64px;color:#303030;font-weight:400;white-space:pre;font-family:'Liberation Sans',sans-serif;left:83.5px;">Pembongkaran Beton Bertulang</div>
<div style="top:489.85px;font-size:12.2px;line-height:14.64px;color:#303030;font-weight:400;white-space:pre;font-family:'Liberation Sans',sans-serif;left:88.5px;width:1000px;text-align:center;">1 M3</div>
<div style="top:489.85px;font-size:12.2px;line-height:14.64px;color:#303030;font-weight:400;white-space:pre;font-family:'Liberation Sans',sans-serif;left:-270.5px;width:1000px;text-align:right;">403,000.00</div>
<div style="left:24px;top:526px;width:854px;height:1px;background:#363636;"></div>
<div style="left:66px;top:506px;width:1px;height:21px;background:#363636;"></div>
<div style="left:80px;top:506px;width:1px;height:21px;background:#363636;"></div>
<div style="left:552px;top:506px;width:1px;height:21px;background:#363636;"></div>
<div style="left:623px;top:506px;width:1px;height:21px;background:#363636;"></div>
<div style="left:732px;top:506px;width:1px;height:21px;background:#363636;"></div>
<div style="left:877px;top:506px;width:1px;height:21px;background:#363636;"></div>
<div style="top:509.85px;font-size:12.2px;line-height:14.64px;color:#303030;font-weight:400;white-space:pre;font-family:'Liberation Sans',sans-serif;left:-455.2px;width:1000px;text-align:center;">11</div>
<div style="top:509.85px;font-size:12.2px;line-height:14.64px;color:#303030;font-weight:400;white-space:pre;font-family:'Liberation Sans',sans-serif;left:83.5px;">Pembongkaran Dinding Tembok Bata Merah</div>
<div style="top:509.85px;font-size:12.2px;line-height:14.64px;color:#303030;font-weight:400;white-space:pre;font-family:'Liberation Sans',sans-serif;left:88.5px;width:1000px;text-align:center;">1 M3</div>
<div style="top:509.85px;font-size:12.2px;line-height:14.64px;color:#303030;font-weight:400;white-space:pre;font-family:'Liberation Sans',sans-serif;left:-270.5px;width:1000px;text-align:right;">299,000.00</div>
<div style="left:24px;top:546px;width:854px;height:1px;background:#363636;"></div>
<div style="left:66px;top:526px;width:1px;height:21px;background:#363636;"></div>
<div style="left:80px;top:526px;width:1px;height:21px;background:#363636;"></div>
<div style="left:552px;top:526px;width:1px;height:21px;background:#363636;"></div>
<div style="left:623px;top:526px;width:1px;height:21px;background:#363636;"></div>
<div style="left:732px;top:526px;width:1px;height:21px;background:#363636;"></div>
<div style="left:877px;top:526px;width:1px;height:21px;background:#363636;"></div>
<div style="top:529.85px;font-size:12.2px;line-height:14.64px;color:#303030;font-weight:400;white-space:pre;font-family:'Liberation Sans',sans-serif;left:-455.2px;width:1000px;text-align:center;">12</div>
<div style="top:529.85px;font-size:12.2px;line-height:14.64px;color:#303030;font-weight:400;white-space:pre;font-family:'Liberation Sans',sans-serif;left:83.5px;">Pekerjaan  Pagar papan rangka Balok</div>
<div style="top:529.85px;font-size:12.2px;line-height:14.64px;color:#303030;font-weight:400;white-space:pre;font-family:'Liberation Sans',sans-serif;left:88.5px;width:1000px;text-align:center;">1 M2</div>
<div style="top:529.85px;font-size:12.2px;line-height:14.64px;color:#303030;font-weight:400;white-space:pre;font-family:'Liberation Sans',sans-serif;left:-270.5px;width:1000px;text-align:right;">260,800.00</div>
<div style="left:24px;top:566px;width:854px;height:25px;background:#ff6a00;"></div>
<div style="left:24px;top:566px;width:854px;height:1px;background:#6a2a00;"></div>
<div style="top:572.47px;font-size:12.6px;line-height:15.12px;color:#3d0a00;font-weight:700;white-space:pre;font-family:'Liberation Sans',sans-serif;left:26.9px;">II.  PEKERJAAN TANAH</div>
<div style="left:24px;top:591px;width:854px;height:20px;background:#c0c0c0;"></div>
<div style="left:24px;top:611px;width:854px;height:1px;background:#363636;"></div>
<div style="left:24px;top:591px;width:854px;height:1px;background:#5a2a08;"></div>
<div style="top:595.52px;font-size:11.6px;line-height:13.92px;color:#111;font-weight:700;white-space:pre;font-family:'Liberation Sans',sans-serif;left:-455.2px;width:1000px;text-align:center;">NO</div>
<div style="top:594.76px;font-size:12.4px;line-height:14.88px;color:#111;font-weight:700;white-space:pre;font-family:'Liberation Sans',sans-serif;left:-191px;width:1000px;text-align:center;">URAIAN</div>
<div style="top:594.76px;font-size:12.4px;line-height:14.88px;color:#111;font-weight:700;white-space:pre;font-family:'Liberation Sans',sans-serif;left:88.70000000000005px;width:1000px;text-align:center;">SATUAN</div>
<div style="top:594.76px;font-size:12.4px;line-height:14.88px;color:#111;font-weight:700;white-space:pre;font-family:'Liberation Sans',sans-serif;left:178.20000000000005px;width:1000px;text-align:center;transform:scaleX(1.004678607206156);transform-origin:center center;">BIAYA  (Rp.)</div>
<div style="top:594.76px;font-size:12.4px;line-height:14.88px;color:#111;font-weight:700;white-space:pre;font-family:'Liberation Sans',sans-serif;left:305.9px;width:1000px;text-align:center;transform:scaleX(1.0024020645253466);transform-origin:center center;">KETERANGAN</div>
<div style="left:66px;top:591px;width:1px;height:20px;background:#363636;"></div>
<div style="left:552px;top:591px;width:1px;height:20px;background:#363636;"></div>
<div style="left:623px;top:591px;width:1px;height:20px;background:#363636;"></div>
<div style="left:732px;top:591px;width:1px;height:20px;background:#363636;"></div>
<div style="left:877px;top:591px;width:1px;height:20px;background:#363636;"></div>
<div style="left:24px;top:632px;width:854px;height:1px;background:#363636;"></div>
<div style="left:66px;top:611px;width:1px;height:22px;background:#363636;"></div>
<div style="left:80px;top:611px;width:1px;height:22px;background:#363636;"></div>
<div style="left:552px;top:611px;width:1px;height:22px;background:#363636;"></div>
<div style="left:623px;top:611px;width:1px;height:22px;background:#363636;"></div>
<div style="left:732px;top:611px;width:1px;height:22px;background:#363636;"></div>
<div style="left:877px;top:611px;width:1px;height:22px;background:#363636;"></div>
<div style="top:615.85px;font-size:12.2px;line-height:14.64px;color:#303030;font-weight:400;white-space:pre;font-family:'Liberation Sans',sans-serif;left:-455.2px;width:1000px;text-align:center;">1</div>
<div style="top:615.85px;font-size:12.2px;line-height:14.64px;color:#303030;font-weight:400;white-space:pre;font-family:'Liberation Sans',sans-serif;left:83.5px;">Galian tanah  sedalam 1 m</div>
<div style="top:615.85px;font-size:12.2px;line-height:14.64px;color:#303030;font-weight:400;white-space:pre;font-family:'Liberation Sans',sans-serif;left:88.5px;width:1000px;text-align:center;">1 M3</div>
<div style="top:615.85px;font-size:12.2px;line-height:14.64px;color:#303030;font-weight:400;white-space:pre;font-family:'Liberation Sans',sans-serif;left:-270.5px;width:1000px;text-align:right;">27,300.00</div>
<div style="left:24px;top:652px;width:854px;height:1px;background:#363636;"></div>
<div style="left:66px;top:632px;width:1px;height:21px;background:#363636;"></div>
<div style="left:80px;top:632px;width:1px;height:21px;background:#363636;"></div>
<div style="left:552px;top:632px;width:1px;height:21px;background:#363636;"></div>
<div style="left:623px;top:632px;width:1px;height:21px;background:#363636;"></div>
<div style="left:732px;top:632px;width:1px;height:21px;background:#363636;"></div>
<div style="left:877px;top:632px;width:1px;height:21px;background:#363636;"></div>
<div style="top:635.85px;font-size:12.2px;line-height:14.64px;color:#303030;font-weight:400;white-space:pre;font-family:'Liberation Sans',sans-serif;left:-455.2px;width:1000px;text-align:center;">2</div>
<div style="top:635.85px;font-size:12.2px;line-height:14.64px;color:#303030;font-weight:400;white-space:pre;font-family:'Liberation Sans',sans-serif;left:83.5px;">Galian tanah sedalam 2 m</div>
<div style="top:635.85px;font-size:12.2px;line-height:14.64px;color:#303030;font-weight:400;white-space:pre;font-family:'Liberation Sans',sans-serif;left:88.5px;width:1000px;text-align:center;">1 M3</div>
<div style="top:635.85px;font-size:12.2px;line-height:14.64px;color:#303030;font-weight:400;white-space:pre;font-family:'Liberation Sans',sans-serif;left:-270.5px;width:1000px;text-align:right;">35,750.00</div>
<div style="left:24px;top:672px;width:854px;height:1px;background:#363636;"></div>
<div style="left:66px;top:652px;width:1px;height:21px;background:#363636;"></div>
<div style="left:80px;top:652px;width:1px;height:21px;background:#363636;"></div>
<div style="left:552px;top:652px;width:1px;height:21px;background:#363636;"></div>
<div style="left:623px;top:652px;width:1px;height:21px;background:#363636;"></div>
<div style="left:732px;top:652px;width:1px;height:21px;background:#363636;"></div>
<div style="left:877px;top:652px;width:1px;height:21px;background:#363636;"></div>
<div style="top:655.85px;font-size:12.2px;line-height:14.64px;color:#303030;font-weight:400;white-space:pre;font-family:'Liberation Sans',sans-serif;left:-455.2px;width:1000px;text-align:center;">3</div>
<div style="top:655.85px;font-size:12.2px;line-height:14.64px;color:#303030;font-weight:400;white-space:pre;font-family:'Liberation Sans',sans-serif;left:83.5px;">Galian tanah sedalam 3 m</div>
<div style="top:655.85px;font-size:12.2px;line-height:14.64px;color:#303030;font-weight:400;white-space:pre;font-family:'Liberation Sans',sans-serif;left:88.5px;width:1000px;text-align:center;">1 M3</div>
<div style="top:655.85px;font-size:12.2px;line-height:14.64px;color:#303030;font-weight:400;white-space:pre;font-family:'Liberation Sans',sans-serif;left:-270.5px;width:1000px;text-align:right;">49,400.00</div>
<div style="left:24px;top:693px;width:854px;height:1px;background:#363636;"></div>
<div style="left:66px;top:672px;width:1px;height:22px;background:#363636;"></div>
<div style="left:80px;top:672px;width:1px;height:22px;background:#363636;"></div>
<div style="left:552px;top:672px;width:1px;height:22px;background:#363636;"></div>
<div style="left:623px;top:672px;width:1px;height:22px;background:#363636;"></div>
<div style="left:732px;top:672px;width:1px;height:22px;background:#363636;"></div>
<div style="left:877px;top:672px;width:1px;height:22px;background:#363636;"></div>
<div style="top:676.85px;font-size:12.2px;line-height:14.64px;color:#303030;font-weight:400;white-space:pre;font-family:'Liberation Sans',sans-serif;left:-455.2px;width:1000px;text-align:center;">4</div>
<div style="top:676.85px;font-size:12.2px;line-height:14.64px;color:#303030;font-weight:400;white-space:pre;font-family:'Liberation Sans',sans-serif;left:83.5px;">Galian tanah keras sedalam 1 m</div>
<div style="top:676.85px;font-size:12.2px;line-height:14.64px;color:#303030;font-weight:400;white-space:pre;font-family:'Liberation Sans',sans-serif;left:88.5px;width:1000px;text-align:center;">1 M3</div>
<div style="top:676.85px;font-size:12.2px;line-height:14.64px;color:#303030;font-weight:400;white-space:pre;font-family:'Liberation Sans',sans-serif;left:-270.5px;width:1000px;text-align:right;">30,550.00</div>
<div style="left:24px;top:713px;width:854px;height:1px;background:#363636;"></div>
<div style="left:66px;top:693px;width:1px;height:21px;background:#363636;"></div>
<div style="left:80px;top:693px;width:1px;height:21px;background:#363636;"></div>
<div style="left:552px;top:693px;width:1px;height:21px;background:#363636;"></div>
<div style="left:623px;top:693px;width:1px;height:21px;background:#363636;"></div>
<div style="left:732px;top:693px;width:1px;height:21px;background:#363636;"></div>
<div style="left:877px;top:693px;width:1px;height:21px;background:#363636;"></div>
<div style="top:696.85px;font-size:12.2px;line-height:14.64px;color:#303030;font-weight:400;white-space:pre;font-family:'Liberation Sans',sans-serif;left:-455.2px;width:1000px;text-align:center;">5</div>
<div style="top:696.85px;font-size:12.2px;line-height:14.64px;color:#303030;font-weight:400;white-space:pre;font-family:'Liberation Sans',sans-serif;left:83.5px;">Pekerjaan pengupasan tanah setebal 10 cm</div>
<div style="top:696.85px;font-size:12.2px;line-height:14.64px;color:#303030;font-weight:400;white-space:pre;font-family:'Liberation Sans',sans-serif;left:88.5px;width:1000px;text-align:center;">1 M2</div>
<div style="top:696.85px;font-size:12.2px;line-height:14.64px;color:#303030;font-weight:400;white-space:pre;font-family:'Liberation Sans',sans-serif;left:-270.5px;width:1000px;text-align:right;">2,600.00</div>
<div style="left:24px;top:733px;width:854px;height:1px;background:#363636;"></div>
<div style="left:66px;top:713px;width:1px;height:21px;background:#363636;"></div>
<div style="left:80px;top:713px;width:1px;height:21px;background:#363636;"></div>
<div style="left:552px;top:713px;width:1px;height:21px;background:#363636;"></div>
<div style="left:623px;top:713px;width:1px;height:21px;background:#363636;"></div>
<div style="left:732px;top:713px;width:1px;height:21px;background:#363636;"></div>
<div style="left:877px;top:713px;width:1px;height:21px;background:#363636;"></div>
<div style="top:716.85px;font-size:12.2px;line-height:14.64px;color:#303030;font-weight:400;white-space:pre;font-family:'Liberation Sans',sans-serif;left:-455.2px;width:1000px;text-align:center;">6</div>
<div style="top:716.85px;font-size:12.2px;line-height:14.64px;color:#303030;font-weight:400;white-space:pre;font-family:'Liberation Sans',sans-serif;left:83.5px;">Pembuangan tanah sejauh 150 m</div>
<div style="top:716.85px;font-size:12.2px;line-height:14.64px;color:#303030;font-weight:400;white-space:pre;font-family:'Liberation Sans',sans-serif;left:88.5px;width:1000px;text-align:center;">1 M3</div>
<div style="top:716.85px;font-size:12.2px;line-height:14.64px;color:#303030;font-weight:400;white-space:pre;font-family:'Liberation Sans',sans-serif;left:-270.5px;width:1000px;text-align:right;">28,600.00</div>
<div style="left:24px;top:754px;width:854px;height:1px;background:#363636;"></div>
<div style="left:66px;top:733px;width:1px;height:22px;background:#363636;"></div>
<div style="left:80px;top:733px;width:1px;height:22px;background:#363636;"></div>
<div style="left:552px;top:733px;width:1px;height:22px;background:#363636;"></div>
<div style="left:623px;top:733px;width:1px;height:22px;background:#363636;"></div>
<div style="left:732px;top:733px;width:1px;height:22px;background:#363636;"></div>
<div style="left:877px;top:733px;width:1px;height:22px;background:#363636;"></div>
<div style="top:737.85px;font-size:12.2px;line-height:14.64px;color:#303030;font-weight:400;white-space:pre;font-family:'Liberation Sans',sans-serif;left:-455.2px;width:1000px;text-align:center;">7</div>
<div style="top:737.85px;font-size:12.2px;line-height:14.64px;color:#303030;font-weight:400;white-space:pre;font-family:'Liberation Sans',sans-serif;left:83.5px;">Urugan tanah kembali</div>
<div style="top:737.85px;font-size:12.2px;line-height:14.64px;color:#303030;font-weight:400;white-space:pre;font-family:'Liberation Sans',sans-serif;left:88.5px;width:1000px;text-align:center;">1 M3</div>
<div style="top:737.85px;font-size:12.2px;line-height:14.64px;color:#303030;font-weight:400;white-space:pre;font-family:'Liberation Sans',sans-serif;left:-270.5px;width:1000px;text-align:right;">13,600.00</div>
<div style="left:24px;top:774px;width:854px;height:1px;background:#363636;"></div>
<div style="left:66px;top:754px;width:1px;height:21px;background:#363636;"></div>
<div style="left:80px;top:754px;width:1px;height:21px;background:#363636;"></div>
<div style="left:552px;top:754px;width:1px;height:21px;background:#363636;"></div>
<div style="left:623px;top:754px;width:1px;height:21px;background:#363636;"></div>
<div style="left:732px;top:754px;width:1px;height:21px;background:#363636;"></div>
<div style="left:877px;top:754px;width:1px;height:21px;background:#363636;"></div>
<div style="top:757.85px;font-size:12.2px;line-height:14.64px;color:#303030;font-weight:400;white-space:pre;font-family:'Liberation Sans',sans-serif;left:-455.2px;width:1000px;text-align:center;">8</div>
<div style="top:757.85px;font-size:12.2px;line-height:14.64px;color:#303030;font-weight:400;white-space:pre;font-family:'Liberation Sans',sans-serif;left:83.5px;">Pemadatan Tanah</div>
<div style="top:757.85px;font-size:12.2px;line-height:14.64px;color:#303030;font-weight:400;white-space:pre;font-family:'Liberation Sans',sans-serif;left:88.5px;width:1000px;text-align:center;">1 M3</div>
<div style="top:757.85px;font-size:12.2px;line-height:14.64px;color:#303030;font-weight:400;white-space:pre;font-family:'Liberation Sans',sans-serif;left:-270.5px;width:1000px;text-align:right;">33,800.00</div>
<div style="left:877px;top:546px;width:1px;height:20px;background:#7a7a7a;"></div>
<svg style="left:24px;top:343.5px;" width="5" height="5" viewBox="0 0 5 5"><path d="M0 0 H5 L0 5 Z" fill="#1e7a3e"/></svg>
<div style="left:1003px;top:192px;width:17px;height:577px;background:#e6e6e6;"></div>
<div style="left:1003px;top:206px;width:1px;height:563px;background:#c4c4c4;"></div>
<div style="left:1007px;top:194.7px;width:13px;height:13.3px;background:#fff;"></div>
<svg style="left:1009.5px;top:199px;" width="8" height="5" viewBox="0 0 8 5"><path d="M0 4.5 L4 0.5 L8 4.5 Z" fill="#666"/></svg>
<div style="left:1007px;top:208.9px;width:13px;height:47.3px;background:#fff;"></div>
<div style="left:1007px;top:756px;width:13px;height:13px;background:#fff;"></div>
<svg style="left:1009.5px;top:760.5px;" width="8" height="5" viewBox="0 0 8 5"><path d="M0 0.5 L4 4.5 L8 0.5 Z" fill="#666"/></svg>
<div style="left:0px;top:769px;width:1024px;height:23px;background:#e6e6e6;"></div>
<svg style="left:24px;top:776.8px;" width="5" height="7" viewBox="0 0 5 7"><path d="M5 0 V7 L0 3.5 Z" fill="#c6c6c6"/></svg>
<svg style="left:45.5px;top:776.8px;" width="5" height="7" viewBox="0 0 5 7"><path d="M0 0 V7 L5 3.5 Z" fill="#c6c6c6"/></svg>
<div style="left:83px;top:770.5px;width:99.5px;height:20px;background:#6fbf0c;border:1px solid #b8e08a;"></div>
<div style="top:770.50px;font-size:13px;line-height:15.60px;color:#1d4f14;font-weight:400;white-space:pre;font-family:'Liberation Sans',sans-serif;left:93.5px;transform:scaleX(1.0121919481091468);transform-origin:left center;">Harga satuan</div>
<div style="left:185.8px;top:770.6px;width:128.7px;height:19.2px;background:#f7f700;border:1px solid #f2f2a0;"></div>
<div style="top:770.50px;font-size:13px;line-height:15.60px;color:#3a3a10;font-weight:400;white-space:pre;font-family:'Liberation Sans',sans-serif;left:197.1px;transform:scaleX(0.9790193442814564);transform-origin:left center;">Analisis Pekerjaan</div>
<div style="left:315.5px;top:769.5px;width:126px;height:19.5px;background:linear-gradient(#ffffff,#fbe0e0 40%,#f2a0a0);border-left:1px solid #8a8a8a;border-right:1px solid #c8c8c8;"></div>
<div style="left:315.5px;top:788.3px;width:126px;height:1.5px;background:#555;"></div>
<div style="top:770.50px;font-size:13px;line-height:15.60px;color:#2f6b47;font-weight:700;white-space:pre;font-family:'Liberation Sans',sans-serif;left:324.5px;transform:scaleX(0.9900022345402253);transform-origin:left center;">Satuan Pekerjaan</div>
<div style="left:443.6px;top:772px;width:41.5px;height:17.2px;background:#333399;border:1px solid #a8a8e8;"></div>
<div style="top:770.50px;font-size:13px;line-height:15.60px;color:#e4e4f7;font-weight:400;white-space:pre;font-family:'Liberation Sans',sans-serif;left:452px;transform:scaleX(0.8679234253982171);transform-origin:left center;">RAB</div>
<div style="left:489px;top:772px;width:53px;height:17.2px;background:#a3306a;border:1px solid #e0a8c8;"></div>
<div style="top:770.50px;font-size:13px;line-height:15.60px;color:#f8e0ec;font-weight:400;white-space:pre;font-family:'Liberation Sans',sans-serif;left:498.1px;transform:scaleX(0.92875111748685);transform-origin:left center;">Rekap</div>
<svg style="left:569px;top:772px;" width="17.5" height="17.5" viewBox="0 0 17.5 17.5"><circle cx="8.75" cy="8.75" r="7.6" fill="none" stroke="#7a7a7a" stroke-width="1.1"/><path d="M8.75 4.5 V13 M4.5 8.75 H13" stroke="#6a6a6a" stroke-width="1.3"/></svg>
<div style="left:824.8px;top:777px;width:1.5px;height:1.5px;background:#9a9a9a;"></div>
<div style="left:824.8px;top:781px;width:1.5px;height:1.5px;background:#9a9a9a;"></div>
<div style="left:824.8px;top:785px;width:1.5px;height:1.5px;background:#9a9a9a;"></div>
<div style="left:839.8px;top:773.6px;width:12.5px;height:13.8px;background:#fff;"></div>
<svg style="left:843.5px;top:777px;" width="5" height="8" viewBox="0 0 5 8"><path d="M5 0 V8 L0 4 Z" fill="#666"/></svg>
<div style="left:853.5px;top:773.6px;width:15.5px;height:13.8px;background:#fff;border:1px solid #cfcfcf;"></div>
<div style="left:869px;top:773.6px;width:120px;height:13.8px;background:#d9d9d9;"></div>
<div style="left:989.6px;top:773.6px;width:12.4px;height:13.8px;background:#fff;"></div>
<svg style="left:993.5px;top:777px;" width="5" height="8" viewBox="0 0 5 8"><path d="M0 0 V8 L5 4 Z" fill="#666"/></svg>
<div style="left:0px;top:792px;width:1024px;height:22px;background:#f0f0f0;"></div>
<div style="left:0px;top:792px;width:1024px;height:1px;background:#dadada;"></div>
<div style="top:795.62px;font-size:11.5px;line-height:13.80px;color:#444;font-weight:400;white-space:pre;font-family:'Liberation Sans',sans-serif;left:7px;transform:scaleX(0.842283377593946);transform-origin:left center;">Ready</div>
<div style="left:749.7px;top:793px;width:30.5px;height:19.4px;background:#cfcfcf;"></div>
<svg style="left:759px;top:797px;" width="10" height="10" viewBox="0 0 10 10"><rect x="0.5" y="0.5" width="9" height="9" fill="none" stroke="#555"/><path d="M3.5 0.5 V9.5 M6.5 0.5 V9.5 M0.5 3.5 H9.5 M0.5 6.5 H9.5" stroke="#555"/></svg>
<svg style="left:790.5px;top:797px;" width="11" height="10" viewBox="0 0 11 10"><rect x="0.5" y="0.5" width="10" height="9" fill="none" stroke="#666"/><rect x="2.5" y="2.5" width="6" height="5" fill="none" stroke="#666"/></svg>
<svg style="left:823px;top:797px;" width="11" height="10" viewBox="0 0 11 10"><rect x="0.5" y="0.5" width="10" height="9" fill="none" stroke="#666"/><path d="M5.5 0.5 V5 H0.5" fill="none" stroke="#666"/></svg>
<div style="left:848.7px;top:801.2px;width:6.3px;height:1.5px;background:#444;"></div>
<div style="left:859.2px;top:801.4px;width:97px;height:1px;background:#9a9a9a;"></div>
<div style="left:898px;top:796.6px;width:4.2px;height:11.1px;background:#555;"></div>
<div style="left:907.5px;top:798.5px;width:1px;height:6px;background:#aaa;"></div>
<div style="left:960.5px;top:801.4px;width:8.3px;height:1.5px;background:#444;"></div>
<div style="left:963.9px;top:797.7px;width:1.5px;height:9px;background:#444;"></div>
<div style="top:796.39px;font-size:11px;line-height:13.20px;color:#555;font-weight:400;white-space:pre;font-family:'Liberation Sans',sans-serif;left:981.8px;transform:scaleX(0.8629927965650616);transform-origin:left center;">85%</div>
<div style="left:0px;top:62px;width:2px;height:752px;background:#5e9479;"></div>
<div style="left:1020px;top:62px;width:2px;height:752px;background:#f4f8f5;"></div>
<div style="left:1022px;top:62px;width:2px;height:752px;background:#6a9a80;"></div>
<div style="left:0px;top:812.8px;width:1024px;height:1.2px;background:#6a7a6e;"></div>
</body></html>
